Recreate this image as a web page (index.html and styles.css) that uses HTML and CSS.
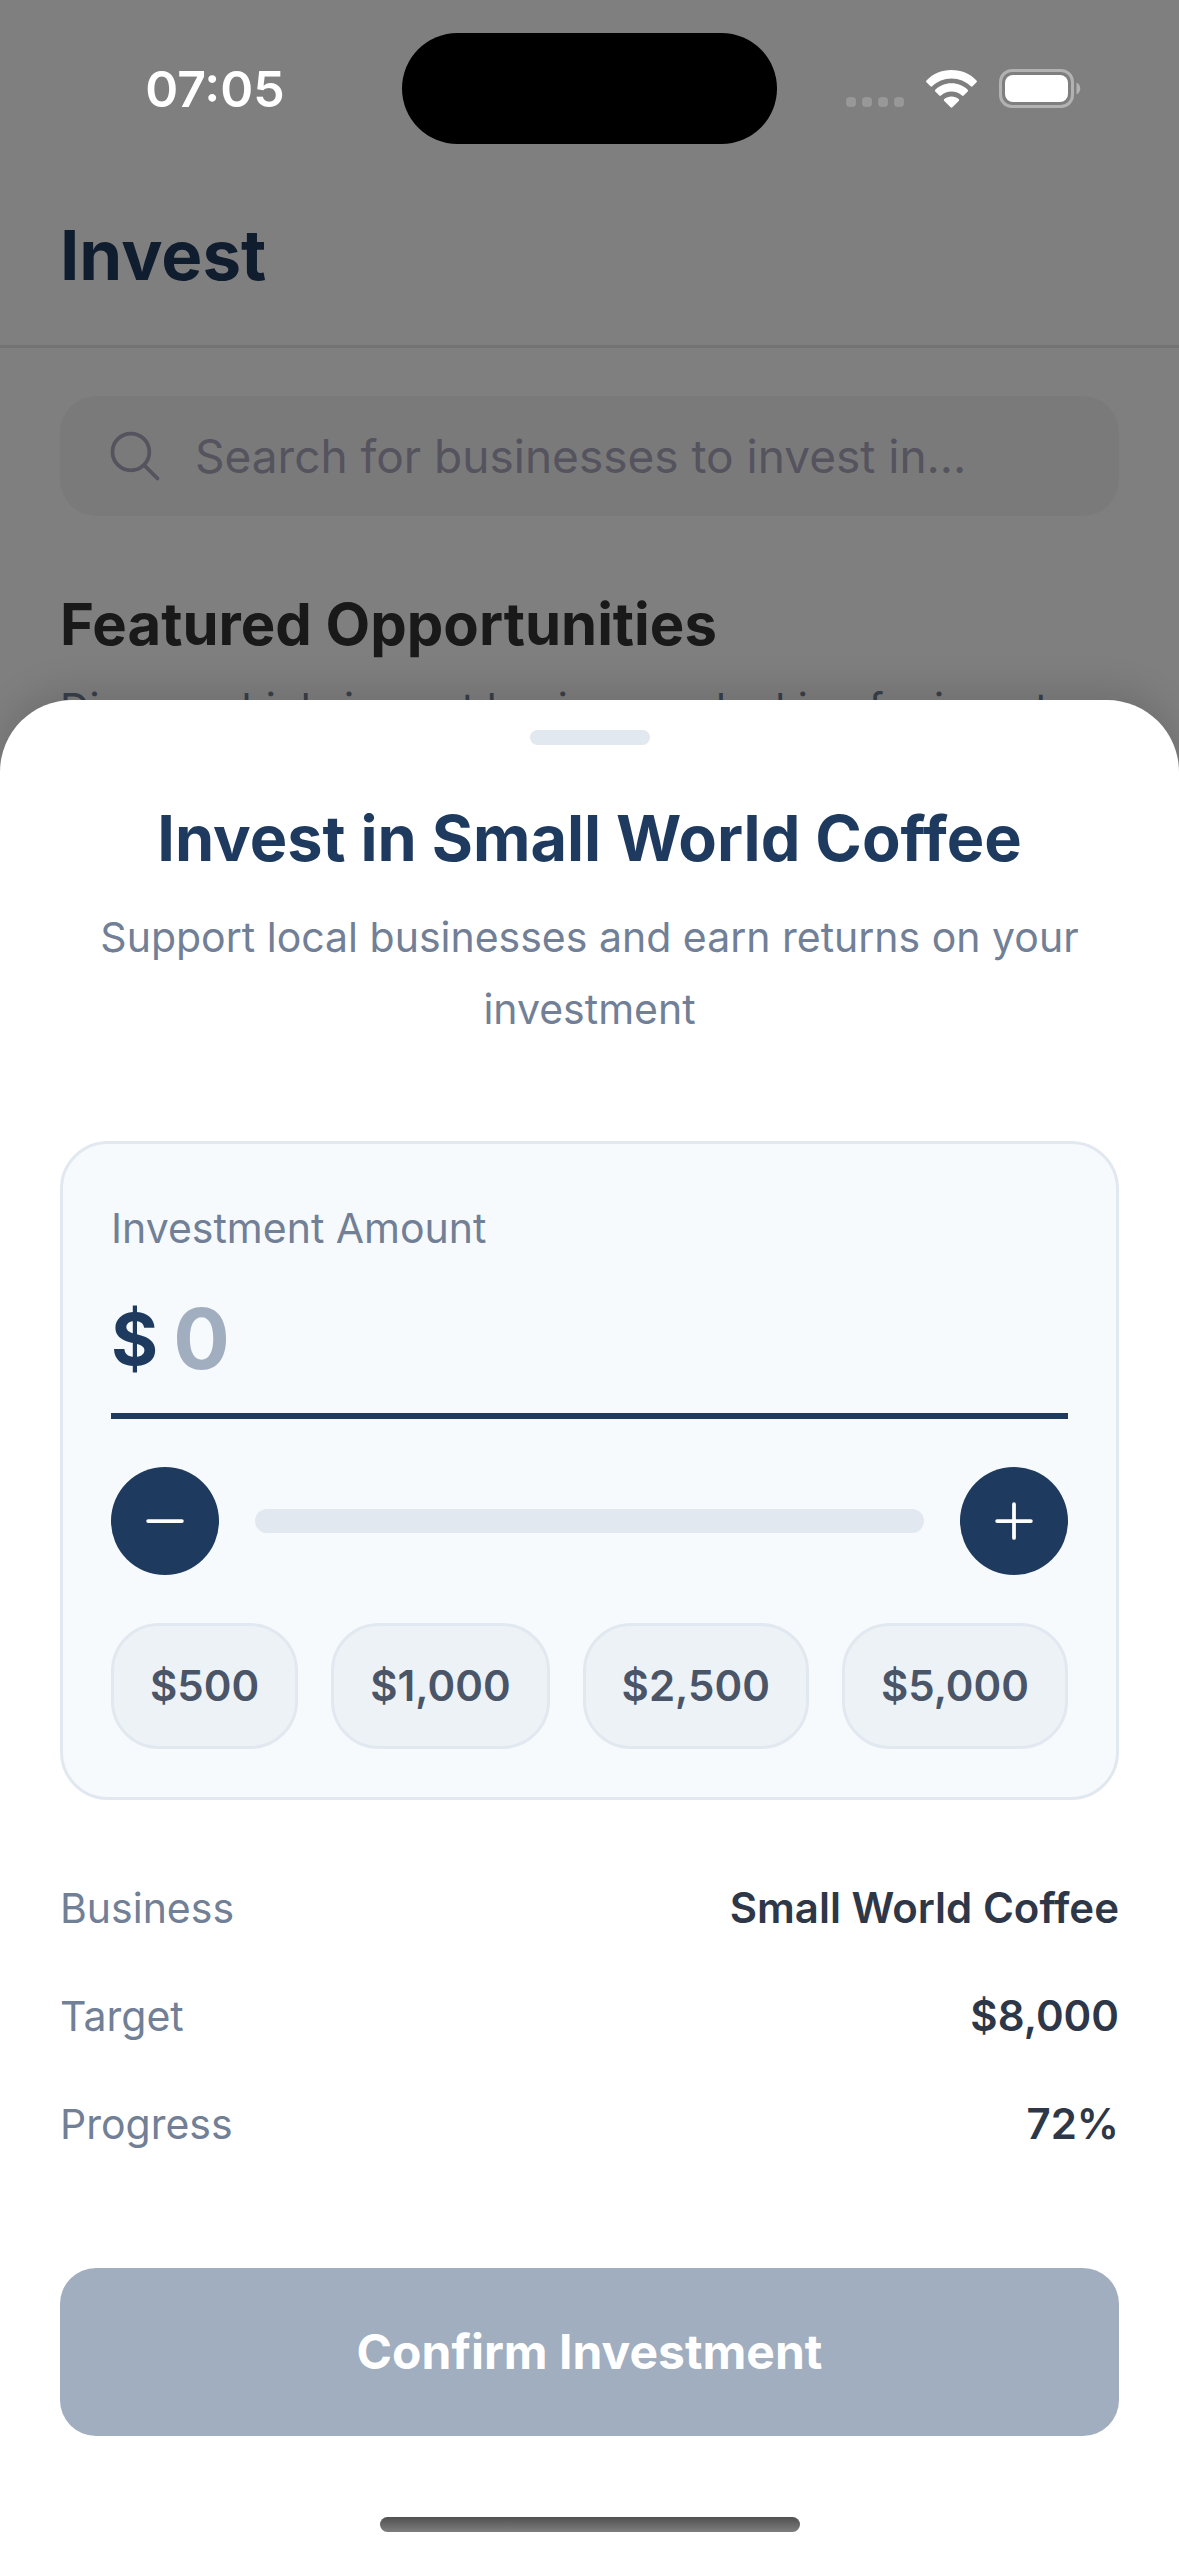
FILE: index.html
```html
<!DOCTYPE html>
<html lang="en">
<head>
<meta charset="utf-8">
<meta name="viewport" content="width=device-width, initial-scale=1">
<title>Invest</title>
<link rel="stylesheet" href="styles.css">
</head>
<body>
<div class="screen">
  <div class="page">
    <header class="page-header">
      <h1 class="page-title">Invest</h1>
    </header>
    <main class="page-body">
      <label class="search">
        <svg class="icon" viewBox="0 0 512 512" aria-hidden="true"><circle cx="221" cy="221" r="157"/><path d="M338 338L448 448"/></svg>
        <input class="search-input" type="search" placeholder="Search for businesses to invest in..." aria-label="Search businesses">
      </label>
      <h2 class="section-title">Featured Opportunities</h2>
      <p class="section-text">Discover high-impact businesses looking for investors</p>
    </main>
  </div>

  <div class="backdrop"></div>

  <div class="status-bar">
    <time class="clock">07:05</time>
    <div class="island"></div>
    <div class="status-icons">
      <div class="signal"><i></i><i></i><i></i><i></i></div>
      <svg class="wifi" viewBox="0 0 51 38" aria-hidden="true">
        <path d="M25.500 0C35.500 0 44.500 4 50.500 10.500q.8.900 0 1.800L46.500 16.300q-.8.800-1.700 0C39.800 11.400 33 8.500 25.500 8.500S11.200 11.400 6.200 16.300q-.9.800-1.700 0L.5 12.300q-.8-.9 0-1.800C6.500 4 15.500 0 25.500 0z"/>
        <path d="M25.500 13.200c6.300 0 12 2.500 16.200 6.500q.9.900 0 1.800l-4 4q-.8.800-1.700 0c-2.800-2.500-6.500-4-10.500-4s-7.700 1.500-10.500 4q-.9.800-1.700 0l-4-4q-.9-.9 0-1.800c4.200-4 9.900-6.500 16.200-6.500z"/>
        <path d="M25.500 26.500c2.800 0 5.300 1 7.200 2.600q.9.900 0 1.800l-6.300 6.400q-.9.800-1.800 0l-6.300-6.400q-.9-.9 0-1.800c1.900-1.600 4.400-2.600 7.200-2.600z"/>
      </svg>
      <svg class="battery" viewBox="0 0 82 39" aria-hidden="true">
        <rect x="1.500" y="1.500" width="72" height="36" rx="11.500" fill="none" stroke="#b2b2b2" stroke-width="3"/>
        <rect x="6" y="6" width="63" height="27" rx="8" fill="#fff"/>
        <path d="M77.500 13.500c5 2 5 10 0 12z" fill="#b2b2b2"/>
      </svg>
    </div>
  </div>

  <section class="sheet" role="dialog" aria-labelledby="sheet-title">
    <div class="handle"></div>
    <h2 class="sheet-title" id="sheet-title">Invest in Small World Coffee</h2>
    <p class="sheet-text">Support local businesses and earn returns on your investment</p>

    <div class="card">
      <label class="card-label" for="amount">Investment Amount</label>
      <div class="amount">
        <span class="currency">$</span>
        <input class="amount-input" id="amount" type="text" inputmode="numeric" placeholder="0">
      </div>
      <div class="stepper">
        <button class="round-button" type="button" aria-label="Decrease amount">
          <svg class="icon" viewBox="0 0 512 512" aria-hidden="true"><path d="M400 256H112"/></svg>
        </button>
        <input class="slider" type="range" min="0" max="8000" value="0" aria-label="Amount slider">
        <button class="round-button" type="button" aria-label="Increase amount">
          <svg class="icon" viewBox="0 0 512 512" aria-hidden="true"><path d="M256 112v288M400 256H112"/></svg>
        </button>
      </div>
      <div class="presets">
        <button class="preset" type="button">$500</button>
        <button class="preset" type="button">$1,000</button>
        <button class="preset" type="button">$2,500</button>
        <button class="preset" type="button">$5,000</button>
      </div>
    </div>

    <dl class="details">
      <div class="detail"><dt>Business</dt><dd>Small World Coffee</dd></div>
      <div class="detail"><dt>Target</dt><dd>$8,000</dd></div>
      <div class="detail"><dt>Progress</dt><dd>72%</dd></div>
    </dl>

    <button class="confirm" type="button">Confirm Investment</button>
    <div class="home-indicator"></div>
  </section>
</div>
</body>
</html>
```
FILE: styles.css
```css
* { box-sizing: border-box; }

body,
h1, h2, p, dl, dd {
  margin: 0;
}

body {
  font-family: Inter, "Liberation Sans", sans-serif;
  font-variant-ligatures: no-common-ligatures;
  background: #fff;
}

button,
input {
  font: inherit;
  margin: 0;
  border: 0;
}

.screen {
  position: relative;
  min-height: 100vh;
  overflow: hidden;
}

.icon {
  width: 60px;
  height: 60px;
  flex: none;
  fill: none;
  stroke: currentColor;
  stroke-width: 32;
  stroke-linecap: round;
  stroke-linejoin: round;
}

/* Page behind the sheet */
.page-header {
  padding: 207px 60px 42px;
  border-bottom: 3px solid #e6e6e6;
}

.page-title {
  font-size: 69px;
  line-height: 96px;
  font-weight: 700;
  color: #1e3a5f;
}

.page-body { padding: 48px 60px; }

.search {
  display: flex;
  align-items: center;
  gap: 30px;
  height: 120px;
  padding: 0 45px;
  border-radius: 36px;
  background: #f5f5f5;
  color: #a8a6bc;
}

.search-input {
  flex: 1;
  min-width: 0;
  padding: 0;
  background: none;
  font-size: 46px;
  line-height: 60px;
  outline: 0;
}

.search-input::placeholder { color: #a8a6bc; opacity: 1; }

.section-title {
  margin-top: 72px;
  font-size: 58px;
  line-height: 72px;
  font-weight: 700;
  color: #333;
}

.section-text {
  margin-top: 12px;
  font-size: 41px;
  line-height: 72px;
  color: #718096;
}

.backdrop {
  position: absolute;
  inset: 0;
  background: rgba(0, 0, 0, 0.5);
}

/* Status bar */
.status-bar {
  position: absolute;
  inset: 0 0 auto;
  display: grid;
  grid-template-columns: 1fr auto 1fr;
  align-items: center;
  height: 177px;
}

.clock {
  padding-left: 28px;
  text-align: center;
  font-size: 50px;
  line-height: 60px;
  font-weight: 600;
  color: #fff;
}

.island {
  width: 375px;
  height: 111px;
  border-radius: 56px;
  background: #000;
}

.status-icons {
  display: flex;
  align-items: center;
  justify-content: flex-end;
  padding-right: 98px;
}

.signal {
  display: flex;
  gap: 6px;
  margin: 26px 22px 0 0;
}

.signal i {
  width: 10px;
  height: 10px;
  border-radius: 4px;
  background: #989898;
}

.wifi {
  width: 51px;
  height: 38px;
  margin-right: 22px;
  fill: #fff;
}

.battery {
  width: 82px;
  height: 39px;
}

/* Bottom sheet */
.sheet {
  position: absolute;
  inset: auto 0 0;
  padding: 30px 60px 120px;
  border-radius: 72px 72px 0 0;
  background: #fff;
  box-shadow: 0 -12px 36px rgba(0, 0, 0, 0.12);
}

.handle {
  width: 120px;
  height: 15px;
  margin: 0 auto;
  border-radius: 8px;
  background: #e2e8f0;
}

.sheet-title {
  margin-top: 48px;
  font-size: 63px;
  line-height: 90px;
  font-weight: 700;
  text-align: center;
  color: #1e3a5f;
}

.sheet-text {
  margin-top: 18px;
  font-size: 41px;
  line-height: 72px;
  text-align: center;
  color: #718096;
}

.card {
  margin-top: 96px;
  padding: 48px;
  border: 3px solid #e2e8f0;
  border-radius: 48px;
  background: #f7fafc;
}

.card-label {
  display: block;
  font-size: 41px;
  line-height: 72px;
  color: #718096;
}

.amount {
  display: flex;
  align-items: center;
  gap: 15px;
  margin-top: 27px;
  padding-bottom: 26px;
  border-bottom: 6px solid #1e3a5f;
  font-weight: 700;
  line-height: 96px;
  color: #1e3a5f;
}

.currency { font-size: 72px; }

.amount-input {
  flex: 1;
  min-width: 0;
  height: 96px;
  padding: 0;
  background: none;
  font-size: 84px;
  color: #1e3a5f;
  outline: 0;
}

.amount-input::placeholder { color: #a0aec0; opacity: 1; }

.stepper {
  display: flex;
  align-items: center;
  gap: 36px;
  margin-top: 48px;
}

.round-button {
  display: flex;
  flex: none;
  align-items: center;
  justify-content: center;
  width: 108px;
  height: 108px;
  padding: 0;
  border-radius: 50%;
  background: #1e3a5f;
  color: #fff;
}

.slider {
  flex: 1;
  min-width: 0;
  height: 24px;
  border-radius: 12px;
  background: #e2e8f0;
  appearance: none;
}

.slider::-webkit-slider-thumb {
  width: 24px;
  height: 24px;
  background: transparent;
  appearance: none;
}

.presets {
  display: flex;
  justify-content: space-between;
  margin-top: 48px;
}

.preset {
  padding: 36px;
  border: 3px solid #e2e8f0;
  border-radius: 48px;
  background: #edf2f7;
  font-size: 42px;
  line-height: 48px;
  font-weight: 600;
  color: #4a5568;
}

.details { margin-top: 54px; }

.detail {
  display: flex;
  justify-content: space-between;
  padding: 24px 0;
  font-size: 41px;
  line-height: 60px;
  color: #718096;
}

.detail dd {
  font-size: 42px;
  font-weight: 600;
  color: #2d3748;
}

.confirm {
  display: block;
  width: 100%;
  margin-top: 90px;
  padding: 54px;
  border-radius: 36px;
  background: #a0aec0;
  font-size: 48px;
  line-height: 60px;
  font-weight: 700;
  color: #fff;
}

.home-indicator {
  position: absolute;
  bottom: 24px;
  left: 50%;
  width: 420px;
  height: 15px;
  margin-left: -210px;
  border-radius: 8px;
  background: linear-gradient(#505050, #7e7e7e);
}
```
